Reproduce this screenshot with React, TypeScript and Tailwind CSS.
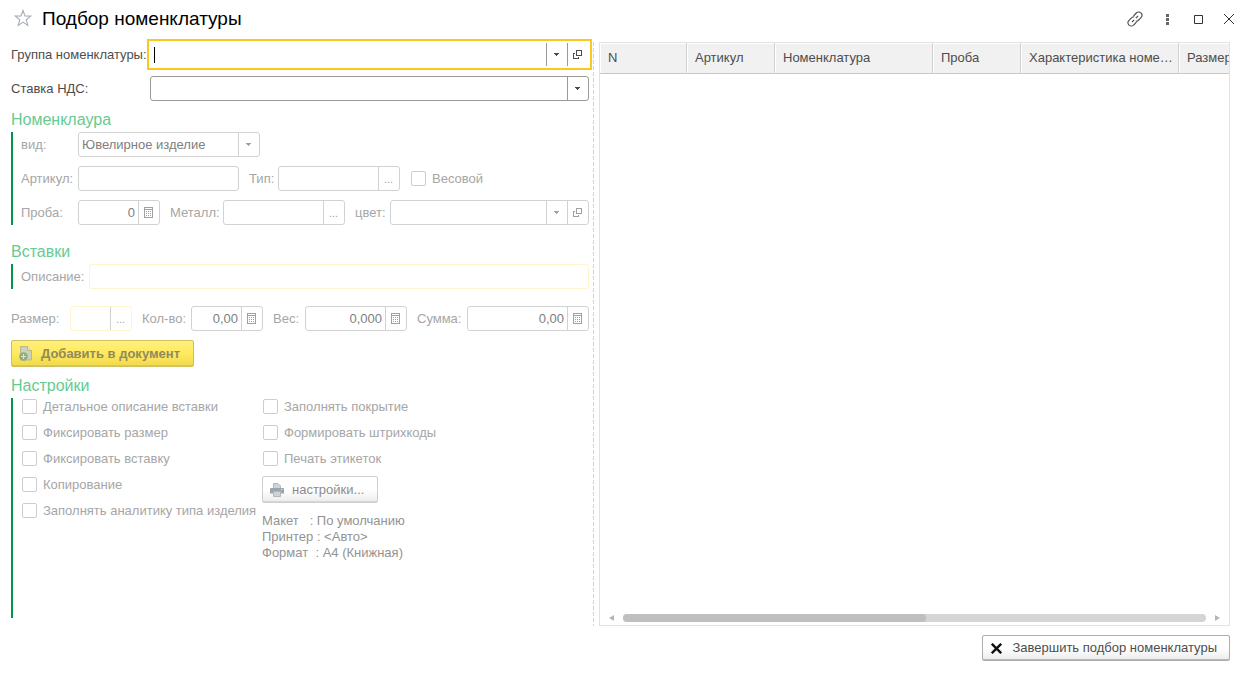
import type { ReactNode } from "react"
import clsx from "clsx"

function ArrowIcon() {
  return (
    <svg width="5" height="3" viewBox="0 0 5 3" fill="currentColor" shapeRendering="crispEdges">
      <path d="M0 0h5v1H0zM1 1h3v1H1zM2 2h1v1H2z" />
    </svg>
  )
}

function OpenIcon() {
  return (
    <svg width="9" height="9" viewBox="0 0 9 9" fill="none" stroke="currentColor" shapeRendering="crispEdges">
      <path d="M3.5 0.5h5v5h-5z" />
      <path d="M2 3.5H0.5v5h5V7" />
    </svg>
  )
}

function CalcIcon() {
  return (
    <svg width="9" height="11" viewBox="0 0 9 11" fill="none" stroke="currentColor" shapeRendering="crispEdges">
      <path d="M0.5 0.5h8v10h-8zM0 2.5h9" />
      <path d="M2 4.5h5M2 6.5h5M2 8.5h5" strokeDasharray="1 1" />
    </svg>
  )
}

function StarIcon() {
  return (
    <svg width="18" height="18" viewBox="0 0 18 18" fill="none" stroke="#a9adb5" strokeWidth="1.1">
      <path d="M9 1.500l2 5.500 5.800.1-4.600 3.600 1.600 5.700L9 13.100l-4.800 3.300 1.600-5.700L1.200 7.100 7 7z" />
    </svg>
  )
}

function LinkIcon() {
  return (
    <svg width="16" height="16" viewBox="0 0 16 16" fill="none" stroke="#4d4d4d" strokeWidth="1.1">
      <path d="M6.500 5l2.800-3a3.200 3.200 0 0 1 4.700 0 3.300 3.300 0 0 1 0 4.600l-2.800 2.900a3 3 0 0 1-2.400.8" />
      <path d="M9.500 11.200L6.700 14a3.200 3.200 0 0 1-4.700 0 3.300 3.300 0 0 1 0-4.600l2.800-2.800a3 3 0 0 1 2.400-.9" />
      <path d="M5 11l2.200-2.200M8.800 7.200L11 5" />
    </svg>
  )
}

function DocumentAddIcon() {
  return (
    <svg width="14" height="15" viewBox="0 0 14 15">
      <path d="M1.500 0.500h7L12.500 4.500v9.500h-11z" fill="#ccd0bc" stroke="#b9b98c" />
      <path d="M8.500 0.500v4h4" fill="#e4e6d8" stroke="#b9b98c" />
      <circle cx="4.500" cy="10.500" r="4.300" fill="#8fab80" />
      <path d="M4.500 8v5M2 10.500h5" stroke="#e0e6c0" strokeWidth="1.200" />
    </svg>
  )
}

function PrinterIcon() {
  return (
    <svg width="14" height="14" viewBox="0 0 14 14">
      <path d="M3.500 0.500h4.500l2.500 2.500v3h-7z" fill="#d0d3d6" stroke="#b4b8bc" />
      <path d="M1 5h12a1 1 0 0 1 1 1v4.500H0V6a1 1 0 0 1 1-1z" fill="#9ba5ae" />
      <path d="M3.500 8.500h7v5h-7z" fill="#d0d3d6" stroke="#b4b8bc" />
      <path d="M11 6.500h1.500" stroke="#d4d6d9" />
    </svg>
  )
}

type Tone = "active" | "muted" | "required"

const borders: Record<Tone, string> = {
  active: "text-[#4d4d4d]",
  muted: "border-[#d2d2d2] text-[#a0a0a0]",
  required: "border-[#fff5cc] text-[#a0a0a0]",
}

function Field({ tone = "muted", className, children }: { tone?: Tone; className?: string; children: ReactNode }) {
  return <div className={clsx("flex h-[25px] min-w-0 border bg-white", borders[tone], className)}>{children}</div>
}

function FieldButton({ label, tone = "muted", children }: { label: string; tone?: Tone; children: ReactNode }) {
  return (
    <button
      type="button"
      aria-label={label}
      disabled={tone !== "active"}
      className={clsx(
        "flex w-[21px] shrink-0 items-center justify-center border-l pr-px text-[11px]",
        tone === "active" ? "border-[#9a9a9a]" : "border-[#d2d2d2]",
      )}
    >
      {children}
    </button>
  )
}

function Label({ htmlFor, className, children }: { htmlFor: string; className?: string; children: ReactNode }) {
  return (
    <label htmlFor={htmlFor} className={clsx("shrink-0 whitespace-nowrap", className)}>
      {children}
    </label>
  )
}

const inputClass = "w-0 min-w-0 flex-1 bg-transparent px-[3px] text-[#808080] outline-none"

function NumberField({ id, value, className }: { id: string; value: string; className: string }) {
  return (
    <Field className={clsx("rounded-[3px]", className)}>
      <input id={id} disabled defaultValue={value} className={clsx(inputClass, "text-right")} />
      <FieldButton label="Калькулятор">
        <CalcIcon />
      </FieldButton>
    </Field>
  )
}

function Check({ children }: { children: ReactNode }) {
  return (
    <label className="flex h-[15px] items-center gap-[6px] whitespace-nowrap">
      <input type="checkbox" disabled className="size-[15px] shrink-0 appearance-none rounded-[2px] border border-[#cdcdcd] bg-white" />
      {children}
    </label>
  )
}

function SectionTitle({ className, children }: { className: string; children: ReactNode }) {
  return <h2 className={clsx("mb-[2px] text-base leading-5 text-[#66cb91]", className)}>{children}</h2>
}

const columns = [
  { name: "N", width: "w-[87px]" },
  { name: "Артикул", width: "w-[88px]" },
  { name: "Номенклатура", width: "w-[158px]" },
  { name: "Проба", width: "w-[88px]" },
  { name: "Характеристика номенклатуры", width: "w-[158px]" },
  { name: "Размер", width: "w-[88px]" },
]

function ItemForm() {
  return (
    <form className="flex w-[578px] shrink-0 flex-col pb-2 text-[#a6a6a6]">
      <div className="flex items-center text-[#4d4d4d]">
        <Label htmlFor="group" className="w-[139px]">Группа номенклатуры:</Label>
        <Field tone="active" className="flex-1 border-white outline-2 outline-offset-1 outline-[#f9c920]">
          <span className="ml-[3px] h-4 w-px self-center bg-black" />
          <input id="group" className={clsx(inputClass, "caret-transparent")} />
          <FieldButton tone="active" label="Выбрать группу"><ArrowIcon /></FieldButton>
          <FieldButton tone="active" label="Открыть группу"><OpenIcon /></FieldButton>
        </Field>
      </div>
      <div className="mt-[9px] flex items-center text-[#4d4d4d]">
        <Label htmlFor="vat" className="w-[139px]">Ставка НДС:</Label>
        <Field tone="active" className="flex-1 rounded-[3px] border-[#9a9a9a]">
          <select id="vat" className="w-0 flex-1 appearance-none px-[3px] outline-none">
            <option></option>
          </select>
          <FieldButton tone="active" label="Выбрать ставку"><ArrowIcon /></FieldButton>
        </Field>
      </div>

      <SectionTitle className="mt-[9px]">Номенклаура</SectionTitle>
      <div className="flex flex-col gap-[9px] border-l-2 border-[#009646] pl-2">
        <div className="flex items-center">
          <Label htmlFor="kind" className="w-[57px]">вид:</Label>
          <Field className="w-[182px] rounded-[3px]">
            <select id="kind" disabled className="w-0 flex-1 appearance-none px-[3px] text-[#808080]">
              <option>Ювелирное изделие</option>
            </select>
            <FieldButton label="Выбрать вид"><ArrowIcon /></FieldButton>
          </Field>
        </div>
        <div className="flex items-center">
          <Label htmlFor="article" className="w-[57px]">Артикул:</Label>
          <Field className="w-[161px] rounded-[3px]">
            <input id="article" disabled className={inputClass} />
          </Field>
          <Label htmlFor="type" className="ml-[10px] w-[29px]">Тип:</Label>
          <Field className="mr-[11px] w-[122px] rounded-[3px]">
            <input id="type" disabled className={inputClass} />
            <FieldButton label="Выбрать тип">...</FieldButton>
          </Field>
          <Check>Весовой</Check>
        </div>
        <div className="flex items-center">
          <Label htmlFor="fineness" className="w-[57px]">Проба:</Label>
          <NumberField id="fineness" value="0" className="w-[82px]" />
          <Label htmlFor="metal" className="ml-[10px] w-[53px]">Металл:</Label>
          <Field className="w-[122px] rounded-[3px]">
            <input id="metal" disabled className={inputClass} />
            <FieldButton label="Выбрать металл">...</FieldButton>
          </Field>
          <Label htmlFor="color" className="ml-[10px] w-[35px]">цвет:</Label>
          <Field className="flex-1 rounded-[3px]">
            <input id="color" disabled className={inputClass} />
            <FieldButton label="Выбрать цвет"><ArrowIcon /></FieldButton>
            <FieldButton label="Открыть цвет"><OpenIcon /></FieldButton>
          </Field>
        </div>
      </div>

      <SectionTitle className="mt-[17px]">Вставки</SectionTitle>
      <div className="flex items-center border-l-2 border-[#009646] pl-2">
        <Label htmlFor="description" className="w-[68px]">Описание:</Label>
        <Field tone="required" className="flex-1 rounded-[3px]">
          <input id="description" disabled className={inputClass} />
        </Field>
      </div>

      <div className="mt-[17px] flex items-center">
        <Label htmlFor="size" className="w-[59px]">Размер:</Label>
        <Field tone="required" className="w-[62px] rounded-[3px]">
          <input id="size" disabled className={inputClass} />
          <FieldButton label="Выбрать размер">...</FieldButton>
        </Field>
        <Label htmlFor="quantity" className="ml-[10px] w-[49px]">Кол-во:</Label>
        <NumberField id="quantity" value="0,00" className="w-[72px]" />
        <Label htmlFor="weight" className="ml-[10px] w-8">Вес:</Label>
        <NumberField id="weight" value="0,000" className="w-[102px]" />
        <Label htmlFor="sum" className="ml-[10px] w-[50px]">Сумма:</Label>
        <NumberField id="sum" value="0,00" className="flex-1" />
      </div>

      <button
        type="button"
        disabled
        className="mt-[9px] flex h-[27px] items-center gap-2 self-start rounded-[2px] border border-[#cdbf5e] bg-linear-to-b from-[#fff07c] via-[#ffe95c] to-[#f0d94e] pr-[13px] pl-[7px] font-bold text-[#918a5c] shadow-[inset_0_-1px_0_#d6c75c]"
      >
        <DocumentAddIcon />
        Добавить в документ
      </button>

      <SectionTitle className="mt-[9px]">Настройки</SectionTitle>
      <div className="flex flex-1 border-l-2 border-[#009646] pt-px pl-[9px]">
        <div className="flex w-[240px] shrink-0 flex-col gap-[11px]">
          <Check>Детальное описание вставки</Check>
          <Check>Фиксировать размер</Check>
          <Check>Фиксировать вставку</Check>
          <Check>Копирование</Check>
          <Check>Заполнять аналитику типа изделия</Check>
        </div>
        <div className="flex flex-col items-start">
          <div className="flex flex-col gap-[11px] pl-px">
            <Check>Заполнять покрытие</Check>
            <Check>Формировать штрихкоды</Check>
            <Check>Печать этикеток</Check>
          </div>
          <button
            type="button"
            disabled
            className="mt-[10px] flex h-[27px] items-center gap-2 rounded-[2px] border border-[#cfcfcf] bg-linear-to-b from-white from-50% to-[#ececec] pr-[13px] pl-[7px] text-[#8c8c8c] shadow-[inset_0_-1px_0_#d6d6d6]"
          >
            <PrinterIcon />
            настройки...
          </button>
          <p className="mt-[10px] leading-4 whitespace-pre text-[#939393]">
            {"Макет   : По умолчанию\nПринтер : <Авто>\nФормат  : A4 (Книжная)"}
          </p>
        </div>
      </div>
    </form>
  )
}

function ItemsTable() {
  return (
    <section className="flex min-w-0 flex-1 flex-col overflow-hidden border border-[#e2e2e2]">
      <table className="w-[667px] table-fixed border-separate border-spacing-0">
        <thead>
          <tr className="h-[31px]">
            {columns.map((column) => (
              <th
                key={column.name}
                className={clsx(
                  "truncate border-r border-b border-r-[#d0d0d0] border-b-[#c8c8c8] bg-[#f1f1f1] pr-1 pl-2 text-left font-normal text-[#4d4d4d] shadow-[inset_1px_1px_0_white]",
                  column.width,
                )}
              >
                {column.name}
              </th>
            ))}
          </tr>
        </thead>
      </table>
      <div className="mt-auto flex h-[15px] items-center gap-[9px] px-[9px] text-[#b5b5b5]">
        <svg width="5" height="6" viewBox="0 0 5 6" fill="currentColor">
          <path d="M5 0v6L0 3z" />
        </svg>
        <div className="h-2 flex-1 rounded-full bg-[#d5d5d5]">
          <div className="h-2 w-[52%] rounded-full bg-[#bfbfbf]" />
        </div>
        <svg width="5" height="6" viewBox="0 0 5 6" fill="currentColor">
          <path d="M0 0v6l5-3z" />
        </svg>
      </div>
    </section>
  )
}

export default function App() {
  return (
    <div className="flex min-h-screen flex-col bg-white pr-[18px] pb-3 pl-[11px] font-['Liberation_Sans',Arial,sans-serif] text-[13px] leading-4">
      <header className="flex h-[42px] items-start pt-[9px]">
        <button type="button" aria-label="В избранное" className="mr-[10px] ml-[3px]">
          <StarIcon />
        </button>
        <h1 className="flex-1 text-[19px] leading-5 text-black">Подбор номенклатуры</h1>
        <div className="-mr-1 flex h-5 items-center text-[#333]">
          <button type="button" aria-label="Получить ссылку" className="mr-[23px]">
            <LinkIcon />
          </button>
          <button type="button" aria-label="Ещё" className="mr-[25px]">
            <svg width="3" height="11" viewBox="0 0 3 11" fill="#666">
              <path d="M0 0h3v3H0zM0 4h3v3H0zM0 8h3v3H0z" />
            </svg>
          </button>
          <button type="button" aria-label="Развернуть" className="mr-[21px]">
            <svg width="9" height="9" viewBox="0 0 9 9" fill="none" stroke="currentColor">
              <path d="M0.5 0.5h8v8h-8z" />
            </svg>
          </button>
          <button type="button" aria-label="Закрыть">
            <svg width="10" height="10" viewBox="0 0 10 10" fill="none" stroke="currentColor">
              <path d="M0 0l10 10M10 0L0 10" />
            </svg>
          </button>
        </div>
      </header>

      <main className="flex flex-1">
        <ItemForm />
        <div className="mr-[5px] ml-1 w-px bg-[repeating-linear-gradient(to_bottom,#d4d4d4_0_4px,transparent_4px_6px)]" />
        <ItemsTable />
      </main>

      <footer className="mt-[9px] flex justify-end">
        <button
          type="button"
          className="flex h-[26px] items-center gap-[10px] rounded-[2px] border border-[#adadad] bg-linear-to-b from-white from-50% to-[#ececec] pr-3 pl-2 text-[#4d4d4d] shadow-[inset_0_-1px_0_#b8b8b8]"
        >
          <svg width="11" height="11" viewBox="0 0 11 11" fill="none" stroke="#111" strokeWidth="2.4">
            <path d="M0.800 0.800l9.400 9.400M10.200 0.800L0.800 10.200" />
          </svg>
          Завершить подбор номенклатуры
        </button>
      </footer>
    </div>
  )
}
